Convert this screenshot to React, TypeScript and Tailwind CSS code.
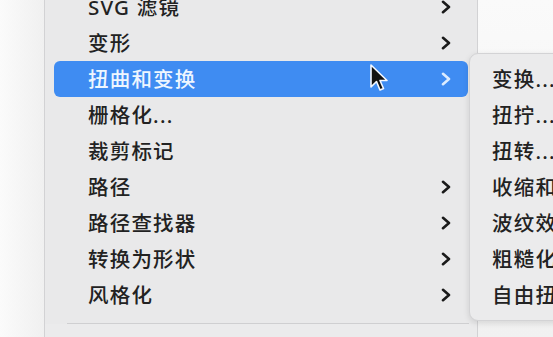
import React from "react";

const mainItems: { label: string; sub?: boolean; active?: boolean }[] = [
  { label: "SVG 滤镜", sub: true },
  { label: "变形", sub: true },
  { label: "扭曲和变换", sub: true, active: true },
  { label: "栅格化..." },
  { label: "裁剪标记" },
  { label: "路径", sub: true },
  { label: "路径查找器", sub: true },
  { label: "转换为形状", sub: true },
  { label: "风格化", sub: true },
];

const subItems = ["变换...", "扭拧...", "扭转...", "收缩和膨胀...", "波纹效果...", "粗糙化...", "自由扭曲..."];

function Chevron({ light }: { light?: boolean }) {
  return (
    <svg width="11" height="14" viewBox="0 0 11 14" className="shrink-0">
      <path
        d="M2 1.8 L8 7 L2 12.2"
        fill="none"
        stroke={light ? "#dcecff" : "#1a1a1a"}
        strokeWidth="2.6"
        strokeLinecap="round"
        strokeLinejoin="round"
      />
    </svg>
  );
}

function Cursor() {
  return (
    <svg width="20" height="30" viewBox="0 0 20 30" className="absolute left-[369px] top-[63px]">
      <path
        d="M2 2 L2 24 L7.5 18.5 L11 27 L14.5 25.5 L11 17.5 L18 17.5 Z"
        fill="#111"
        stroke="#f4f8ff"
        strokeWidth="1.6"
        strokeLinejoin="round"
      />
    </svg>
  );
}

export default function App() {
  return (
    <div
      className="relative w-[553px] h-[337px] overflow-hidden bg-[#f7f7f7] flex"
      style={{ fontFamily: '"Noto Sans", "Noto Sans CJK SC", sans-serif' }}
    >
      <div className="w-[44px] h-full bg-gradient-to-r from-[#fbfbfb] to-[#f0f0f0]" />
      <div className="w-[434px] h-full bg-[#e9e9ea] border-l border-r border-[#d2d2d4] flex flex-col">
        <div className="-mt-[11px] flex flex-col">
          {mainItems.map((it) => (
            <div key={it.label} className="h-[36px] px-[9px] flex">
              <div
                className={
                  "flex-1 flex items-center justify-between pl-[34px] pr-[16px] rounded-[6px] " +
                  (it.active ? "bg-[#3f8cf2]" : "")
                }
              >
                <span
                  className={
                    "text-[20.5px] font-medium tracking-[1.2px] leading-none " +
                    (it.active ? "text-[#eef6ff]" : "text-[#222222]")
                  }
                >
                  {it.label}
                </span>
                {it.sub && <Chevron light={it.active} />}
              </div>
            </div>
          ))}
        </div>
        <div className="mt-[10px] ml-[22px] mr-[8px] h-px bg-[#cfcfd1]" />
        <div className="flex-1 bg-[#ebebec]" />
      </div>
      <div className="flex-1 h-full bg-gradient-to-b from-[#fafafa] to-[#f1f1f1]" />

      <div className="absolute left-[469px] top-[53px] w-[200px] h-[268px] rounded-[9px] bg-[#ebebec] border border-[#d3d3d5] shadow-[0_2px_6px_rgba(0,0,0,0.12)] pt-[7px] overflow-hidden">
        {subItems.map((s) => (
          <div key={s} className="h-[36px] flex items-center pl-[22px]">
            <span className="text-[20.5px] font-medium tracking-[1.2px] leading-none text-[#222222] whitespace-nowrap">{s}</span>
          </div>
        ))}
      </div>

      <Cursor />
    </div>
  );
}
